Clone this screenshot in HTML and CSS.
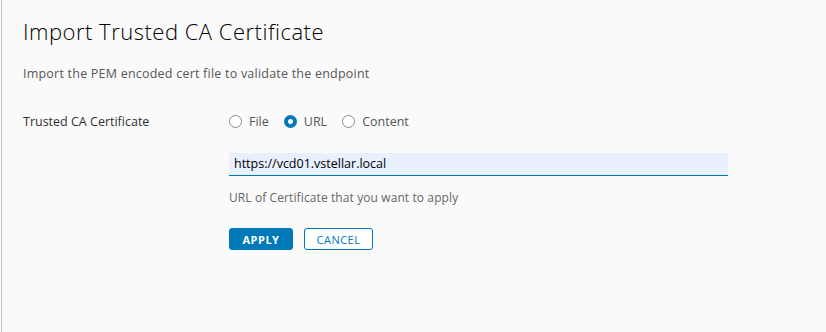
FILE: index.html
```html
<!DOCTYPE html>
<html>
<head>
<meta charset="utf-8">
<link rel="stylesheet" href="styles.css">
</head>
<body>
<div class="panel">
  <h1 class="title">Import Trusted CA Certificate</h1>
  <p class="desc">Import the PEM encoded cert file to validate the endpoint</p>
  <div class="form-row">
    <div class="label">Trusted CA Certificate</div>
    <div class="radios">
      <label class="radio"><span class="circle"></span><span>File</span></label>
      <label class="radio"><span class="circle checked"></span><span>URL</span></label>
      <label class="radio"><span class="circle"></span><span>Content</span></label>
    </div>
  </div>
  <div class="field">
    <div class="input">https://vcd01.vstellar.local</div>
    <div class="helper">URL of Certificate that you want to apply</div>
    <div class="buttons">
      <button class="btn primary">APPLY</button>
      <button class="btn outline">CANCEL</button>
    </div>
  </div>
</div>
</body>
</html>
```
FILE: styles.css
```css
html, body {
  margin: 0;
  padding: 0;
  background: #fafafa;
}
body {
  width: 826px;
  height: 332px;
  overflow: hidden;
  font-family: "Open Sans", Lato, sans-serif;
  color: #565656;
}
.panel {
  box-sizing: border-box;
  height: 332px;
  margin-left: 1px;
  border-left: 1px solid #c8c8c8;
  padding: 16px 0 0 21px;
}
.title {
  margin: 0;
  font-size: 22px;
  font-weight: 300;
  color: #000;
  line-height: 30px;
  letter-spacing: 0.5px;
}
.desc {
  margin: 19px 0 0;
  font-size: 12.5px;
  line-height: 18px;
  color: #565656;
  letter-spacing: 0.22px;
}
.form-row {
  display: flex;
  align-items: center;
  margin-top: 26px;
  height: 24px;
}
.label {
  width: 206px;
  font-size: 12.5px;
  color: #313131;
}
.radios {
  display: flex;
  gap: 15px;
}
.radio {
  display: flex;
  align-items: center;
  gap: 7px;
  font-size: 12.5px;
  color: #565656;
}
.circle {
  box-sizing: border-box;
  width: 13px;
  height: 13px;
  border-radius: 50%;
  border: 1px solid #8c8c8c;
  background: #fff;
}
.circle.checked {
  border: 4.5px solid #0079b8;
  background: #fff;
}
.field {
  margin-left: 206px;
  margin-top: 20px;
}
.input {
  box-sizing: border-box;
  width: 499px;
  height: 23px;
  background: #e8f0fe;
  border-bottom: 1px solid #0079b8;
  font-size: 12.5px;
  color: #000;
  padding: 2px 0 0 5px;
}
.helper {
  margin-top: 13px;
  font-size: 12px;
  color: #666;
  letter-spacing: 0.1px;
}
.buttons {
  display: flex;
  gap: 11px;
  margin-top: 22px;
}
.btn {
  box-sizing: border-box;
  height: 22px;
  border-radius: 3px;
  font-family: "Open Sans", Lato, sans-serif;
  font-size: 11px;
  font-weight: 700;
  letter-spacing: 0.5px;
  padding: 0;
}
.primary {
  background: #0079b8;
  border: 1px solid #0079b8;
  color: #fff;
  width: 64px;
}
.outline {
  background: #fff;
  border: 1px solid #0079b8;
  color: #0079b8;
  font-weight: 400;
  width: 69px;
}
```
